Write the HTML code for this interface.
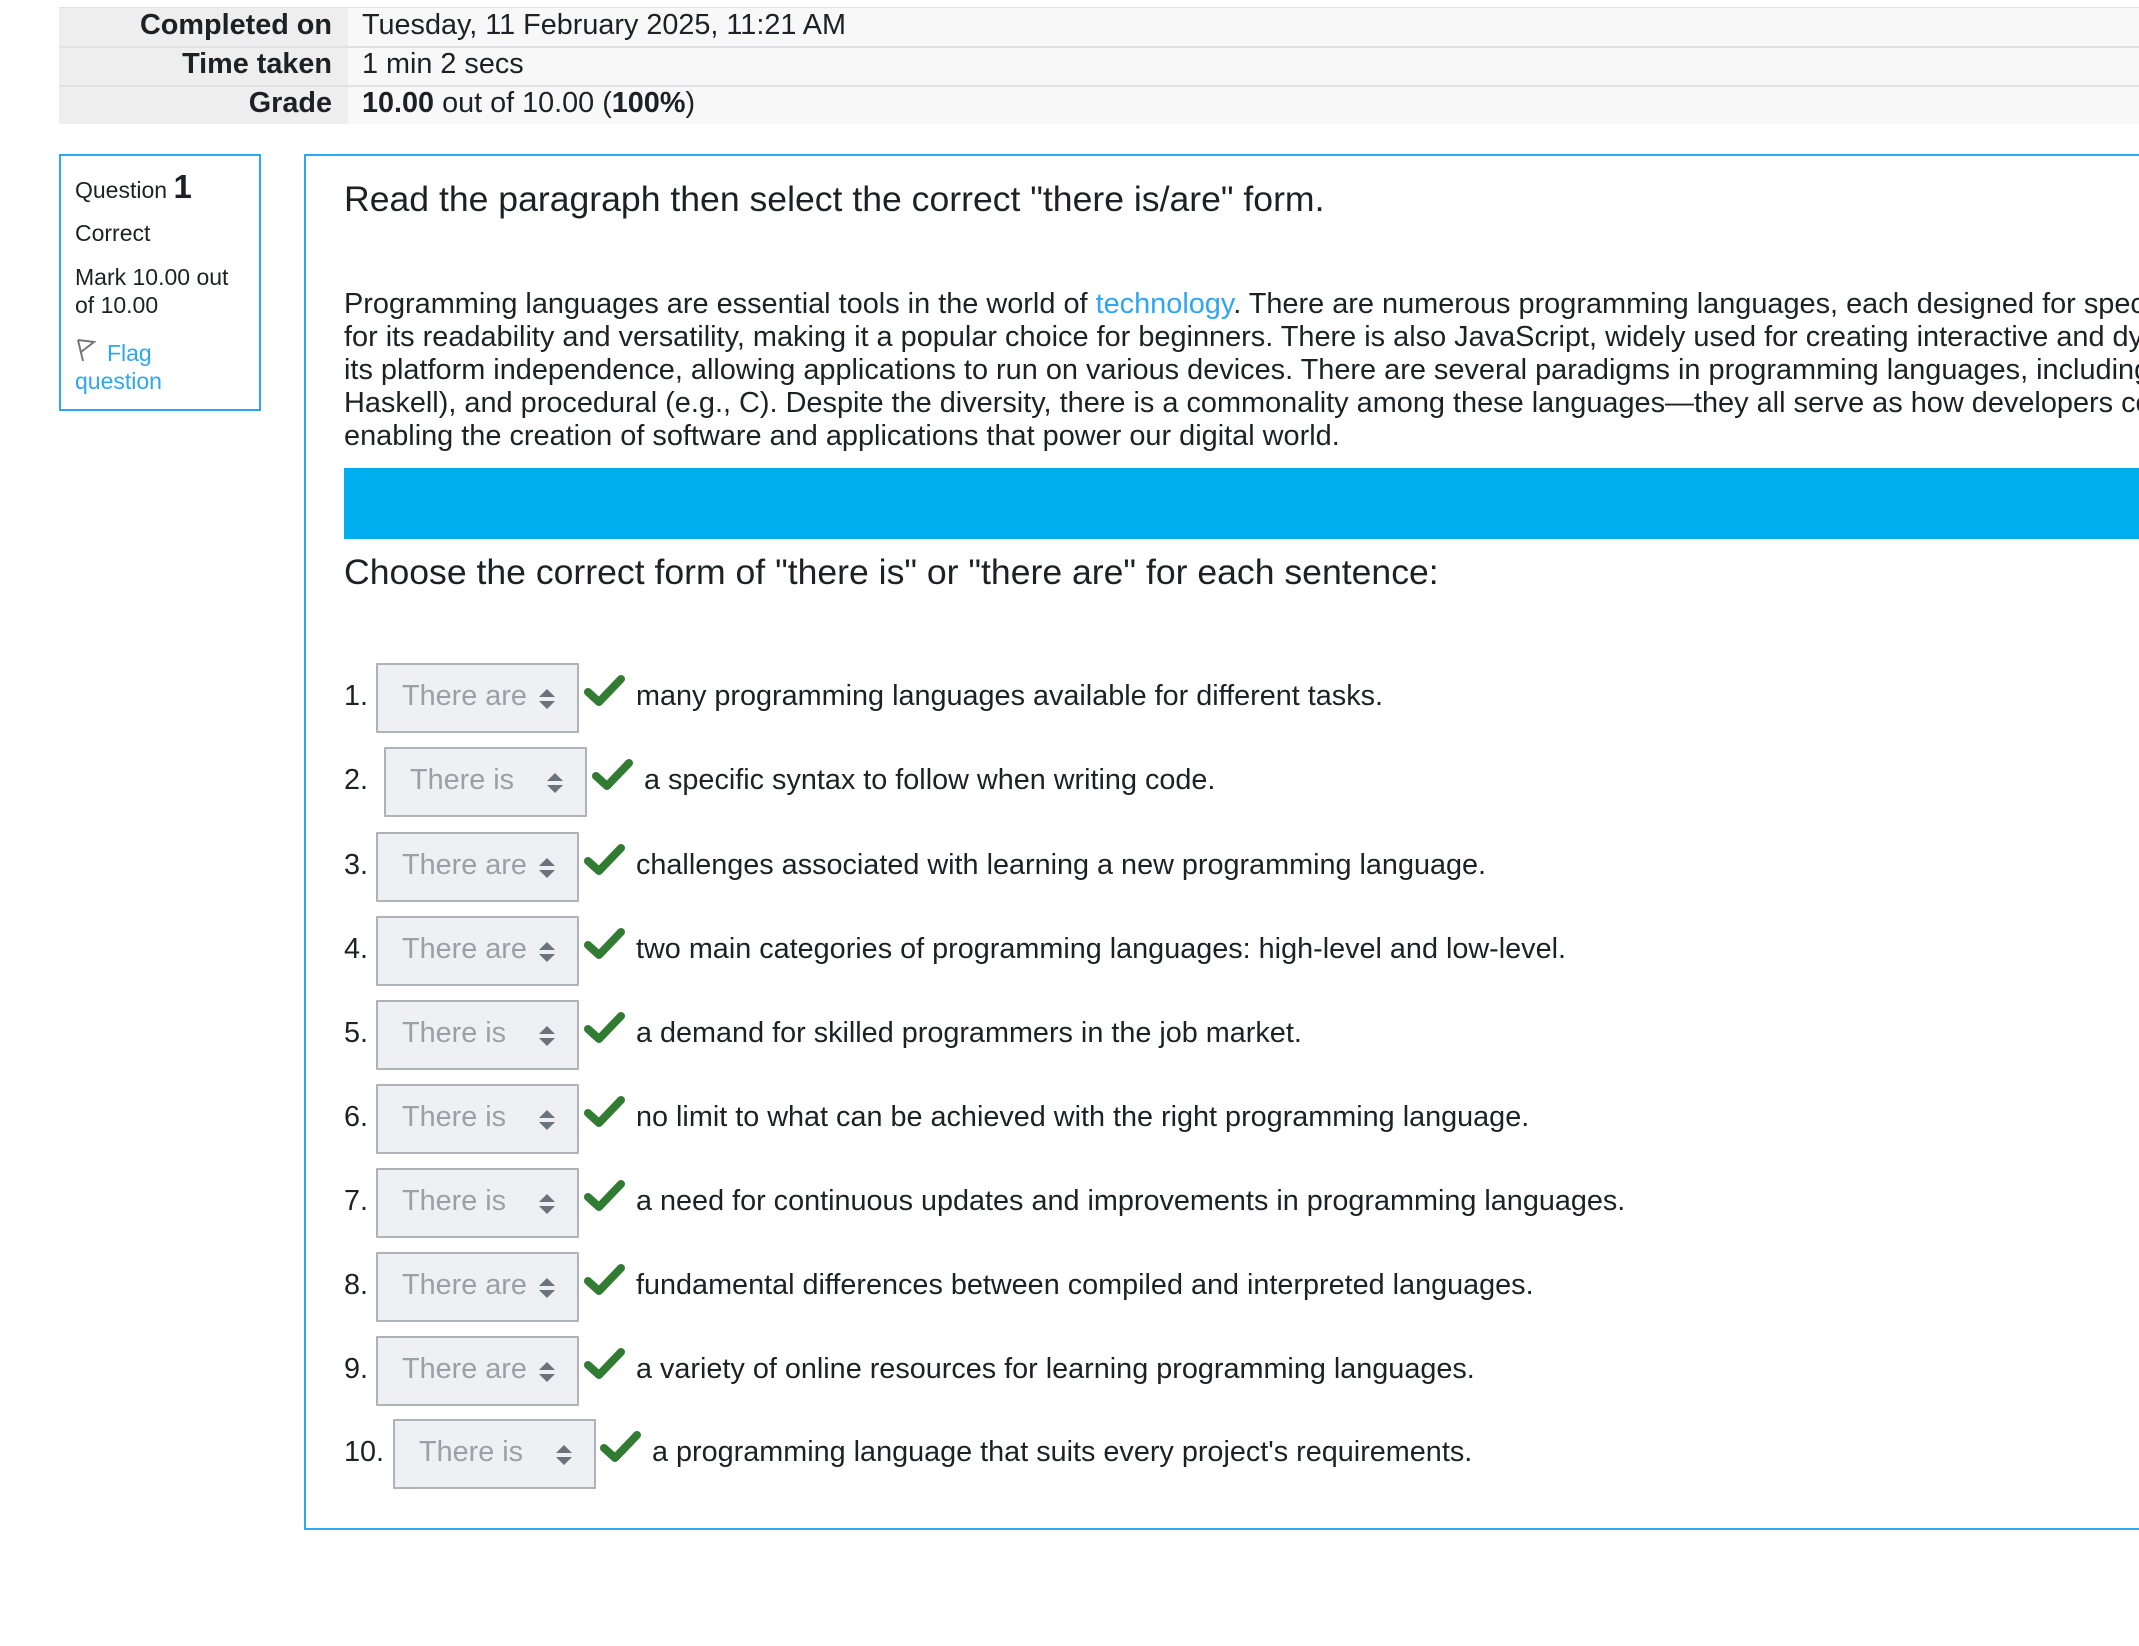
<!DOCTYPE html>
<html><head><meta charset="utf-8"><style>
html,body{margin:0;padding:0;width:2139px;height:1646px;overflow:hidden;background:#fff;font-family:"Liberation Sans",Arial,sans-serif;color:#1d2125}
#w{position:absolute;left:0;top:0;width:2139px;height:1646px;overflow:hidden}
.a{position:absolute;white-space:nowrap}
.tl{background:#eeeeee}.tv{background:#f8f8f9}
.lab{font-weight:bold;font-size:28.8px;text-align:right}
.val{font-size:28.8px}
.sel{position:absolute;width:199px;height:66px;border:2px solid #adb3b9;background:#eff0f3;box-sizing:content-box;border-radius:1px}
.sel span{position:absolute;left:24px;top:15px;font-size:28.8px;color:#9aa0a6}
.sel i{position:absolute;right:22px;top:24px;width:0;height:0;border-left:8px solid transparent;border-right:8px solid transparent;border-bottom:8px solid #6a737b}
.sel b{position:absolute;right:22px;top:36px;width:0;height:0;border-left:8px solid transparent;border-right:8px solid transparent;border-top:8px solid #6a737b}
.num,.txt{font-size:28.8px}
</style></head><body><div id="w">
<div class="a" style="left:59px;top:7px;width:2080px;height:1px;background:#dee2e6"></div>
<div class="a tl" style="left:59px;top:8px;width:289px;height:116px"></div>
<div class="a tv" style="left:348px;top:8px;width:1791px;height:116px"></div>
<div class="a" style="left:59px;top:46px;width:2080px;height:2px;background:#dee2e6"></div>
<div class="a" style="left:59px;top:85px;width:2080px;height:2px;background:#dee2e6"></div>
<div class="a lab" style="left:59px;width:273px;top:9px">Completed on</div>
<div class="a lab" style="left:59px;width:273px;top:48px">Time taken</div>
<div class="a lab" style="left:59px;width:273px;top:87px">Grade</div>
<div class="a val" style="left:362px;top:9px">Tuesday, 11 February 2025, 11:21 AM</div>
<div class="a val" style="left:362px;top:48px">1 min 2 secs</div>
<div class="a val" style="left:362px;top:87px"><b>10.00</b> out of 10.00 (<b>100%</b>)</div>

<div class="a" style="left:59px;top:154px;width:198px;height:253px;border:2px solid #2ea7f2"></div>
<div class="a" style="left:75px;top:168px;font-size:23px">Question <b style="font-size:33px">1</b></div>
<div class="a" style="left:75px;top:220px;font-size:23px">Correct</div>
<div class="a" style="left:75px;top:263px;font-size:23px;line-height:28px">Mark 10.00 out<br>of 10.00</div>
<svg class="a" style="left:75px;top:338px" width="22" height="26" viewBox="0 0 22 26"><path d="M3 2 L8 23 M3 2 L19 4 L6 14" stroke="#777" stroke-width="2" fill="none"/></svg>
<div class="a" style="left:75px;top:339px;font-size:23px;line-height:28px;color:#2ea7f2">&nbsp;&nbsp;&nbsp;&nbsp; Flag<br>question</div>

<div class="a" style="left:304px;top:154px;width:1900px;height:1372px;border:2px solid #2ea7f2"></div>
<div class="a" style="left:344px;top:179px;font-size:35.6px">Read the paragraph then select the correct "there is/are" form.</div>
<div class="a" style="left:344px;top:288px;font-size:28.9px;line-height:33px">Programming languages are essential tools in the world of <span style="color:#2ea7f2">technology</span>. There are numerous programming languages, each designed for specific purposes.<br>for its readability and versatility, making it a popular choice for beginners. There is also JavaScript, widely used for creating interactive and dynamic<br>its platform independence, allowing applications to run on various devices. There are several paradigms in programming languages, including object-<br>Haskell), and procedural (e.g., C). Despite the diversity, there is a commonality among these languages—they all serve as how developers communicate<br>enabling the creation of software and applications that power our digital world.</div>
<div class="a" style="left:344px;top:468px;width:1795px;height:71px;background:#00aeef"></div>
<div class="a" style="left:344px;top:552px;font-size:35.6px">Choose the correct form of "there is" or "there are" for each sentence:</div>

<div class="a num" style="left:344px;top:680px">1.</div><div class="sel" style="left:376px;top:663px"><span>There are</span><i></i><b></b></div><svg class="a" style="left:584px;top:674px" width="42" height="34" viewBox="0 0 42 34"><path d="M4 18 L15 28 L37 5" stroke="#327b32" stroke-width="8" fill="none" stroke-linecap="round" stroke-linejoin="round"/></svg><div class="a txt" style="left:636px;top:680px">many programming languages available for different tasks.</div>

<div class="a num" style="left:344px;top:764px">2.</div><div class="sel" style="left:384px;top:747px"><span>There is</span><i></i><b></b></div><svg class="a" style="left:592px;top:758px" width="42" height="34" viewBox="0 0 42 34"><path d="M4 18 L15 28 L37 5" stroke="#327b32" stroke-width="8" fill="none" stroke-linecap="round" stroke-linejoin="round"/></svg><div class="a txt" style="left:644px;top:764px">a specific syntax to follow when writing code.</div>

<div class="a num" style="left:344px;top:849px">3.</div><div class="sel" style="left:376px;top:832px"><span>There are</span><i></i><b></b></div><svg class="a" style="left:584px;top:843px" width="42" height="34" viewBox="0 0 42 34"><path d="M4 18 L15 28 L37 5" stroke="#327b32" stroke-width="8" fill="none" stroke-linecap="round" stroke-linejoin="round"/></svg><div class="a txt" style="left:636px;top:849px">challenges associated with learning a new programming language.</div>

<div class="a num" style="left:344px;top:933px">4.</div><div class="sel" style="left:376px;top:916px"><span>There are</span><i></i><b></b></div><svg class="a" style="left:584px;top:927px" width="42" height="34" viewBox="0 0 42 34"><path d="M4 18 L15 28 L37 5" stroke="#327b32" stroke-width="8" fill="none" stroke-linecap="round" stroke-linejoin="round"/></svg><div class="a txt" style="left:636px;top:933px">two main categories of programming languages: high-level and low-level.</div>

<div class="a num" style="left:344px;top:1017px">5.</div><div class="sel" style="left:376px;top:1000px"><span>There is</span><i></i><b></b></div><svg class="a" style="left:584px;top:1011px" width="42" height="34" viewBox="0 0 42 34"><path d="M4 18 L15 28 L37 5" stroke="#327b32" stroke-width="8" fill="none" stroke-linecap="round" stroke-linejoin="round"/></svg><div class="a txt" style="left:636px;top:1017px">a demand for skilled programmers in the job market.</div>

<div class="a num" style="left:344px;top:1101px">6.</div><div class="sel" style="left:376px;top:1084px"><span>There is</span><i></i><b></b></div><svg class="a" style="left:584px;top:1095px" width="42" height="34" viewBox="0 0 42 34"><path d="M4 18 L15 28 L37 5" stroke="#327b32" stroke-width="8" fill="none" stroke-linecap="round" stroke-linejoin="round"/></svg><div class="a txt" style="left:636px;top:1101px">no limit to what can be achieved with the right programming language.</div>

<div class="a num" style="left:344px;top:1185px">7.</div><div class="sel" style="left:376px;top:1168px"><span>There is</span><i></i><b></b></div><svg class="a" style="left:584px;top:1179px" width="42" height="34" viewBox="0 0 42 34"><path d="M4 18 L15 28 L37 5" stroke="#327b32" stroke-width="8" fill="none" stroke-linecap="round" stroke-linejoin="round"/></svg><div class="a txt" style="left:636px;top:1185px">a need for continuous updates and improvements in programming languages.</div>

<div class="a num" style="left:344px;top:1269px">8.</div><div class="sel" style="left:376px;top:1252px"><span>There are</span><i></i><b></b></div><svg class="a" style="left:584px;top:1263px" width="42" height="34" viewBox="0 0 42 34"><path d="M4 18 L15 28 L37 5" stroke="#327b32" stroke-width="8" fill="none" stroke-linecap="round" stroke-linejoin="round"/></svg><div class="a txt" style="left:636px;top:1269px">fundamental differences between compiled and interpreted languages.</div>

<div class="a num" style="left:344px;top:1353px">9.</div><div class="sel" style="left:376px;top:1336px"><span>There are</span><i></i><b></b></div><svg class="a" style="left:584px;top:1347px" width="42" height="34" viewBox="0 0 42 34"><path d="M4 18 L15 28 L37 5" stroke="#327b32" stroke-width="8" fill="none" stroke-linecap="round" stroke-linejoin="round"/></svg><div class="a txt" style="left:636px;top:1353px">a variety of online resources for learning programming languages.</div>

<div class="a num" style="left:344px;top:1436px">10.</div><div class="sel" style="left:393px;top:1419px"><span>There is</span><i></i><b></b></div><svg class="a" style="left:600px;top:1430px" width="42" height="34" viewBox="0 0 42 34"><path d="M4 18 L15 28 L37 5" stroke="#327b32" stroke-width="8" fill="none" stroke-linecap="round" stroke-linejoin="round"/></svg><div class="a txt" style="left:652px;top:1436px">a programming language that suits every project's requirements.</div>
</div></body></html>
